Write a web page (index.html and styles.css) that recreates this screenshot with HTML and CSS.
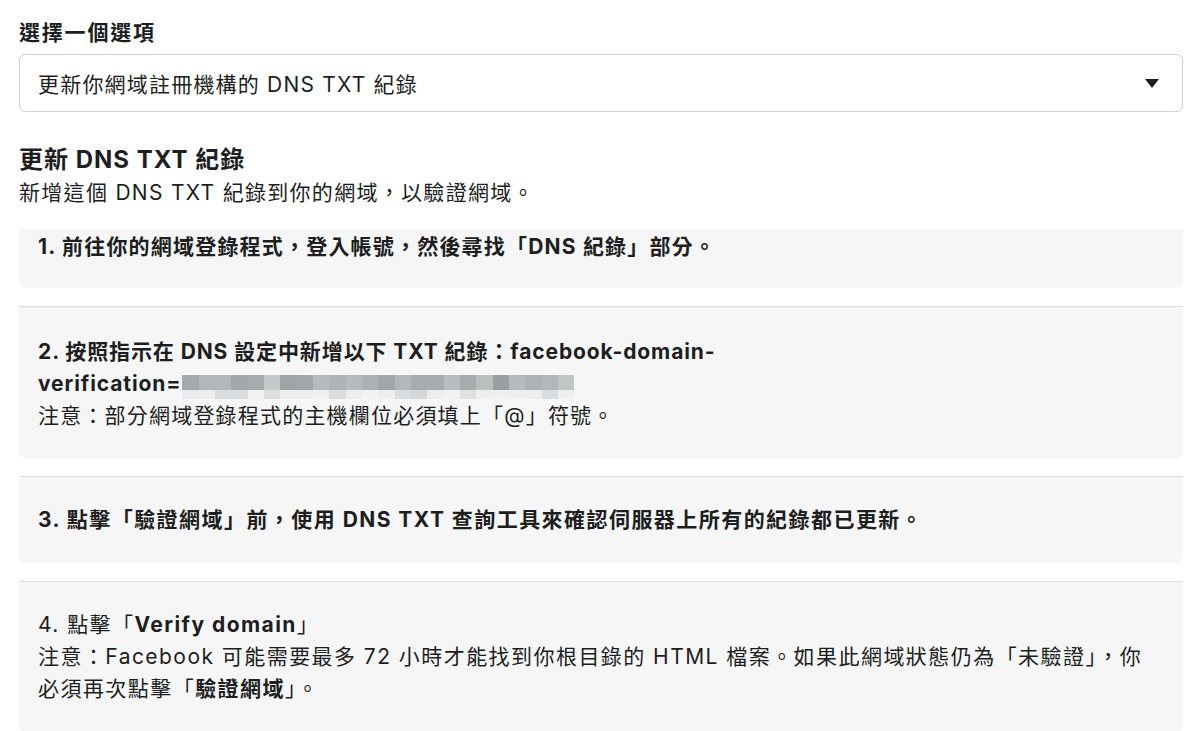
FILE: index.html
```html
<!DOCTYPE html>
<html lang="zh-Hant">
<head>
<meta charset="utf-8">
<link rel="stylesheet" href="styles.css">
</head>
<body>
<div class="page">
  <div class="label">選擇一個選項</div>
  <div class="select">
    <span class="select-text">更新你網域註冊機構的 DNS TXT 紀錄</span>
    <span class="caret"></span>
  </div>

  <h2 class="title">更新 DNS TXT 紀錄</h2>
  <p class="subtitle">新增這個 DNS TXT 紀錄到你的網域，以驗證網域。</p>

  <div class="steps">
    <div class="step step-first"><b>1. 前往你的網域登錄程式，登入帳號，然後尋找「DNS 紀錄」部分。</b></div>
    <div class="step">
      <b class="tight">2. 按照指示在 DNS 設定中新增以下 TXT 紀錄：facebook-domain-</b><br>
      <b class="tight">verification=</b><span class="blur">
        <span class="blur-row top">
          <i style="background:#a5a9ac"></i><i style="background:#b4b7b9"></i><i style="background:#b4b7b9"></i><i style="background:#a5a8ab"></i><i style="background:#a9acaf"></i><i style="background:#c6c9ca"></i><i style="background:#a0a4a7"></i><i style="background:#a3a6a9"></i><i style="background:#b8bbbd"></i><i style="background:#b0b3b6"></i><i style="background:#b8bbbd"></i><i style="background:#aeb1b4"></i><i style="background:#a3a6a9"></i><i style="background:#b4b7b9"></i><i style="background:#a8abae"></i><i style="background:#a8abae"></i><i style="background:#babdbf"></i><i style="background:#a9acaf"></i><i style="background:#bcbfc0"></i><i style="background:#9a9ea1"></i><i style="background:#b8bbbd"></i><i style="background:#afb2b5"></i><i style="background:#b4b7b9"></i><i style="background:#c2c5c6"></i>
        </span>
        <span class="blur-row bottom">
          <i style="background:#eaebec"></i><i style="background:#ededee"></i><i style="background:#d9dbdc"></i><i style="background:#d9dbdc"></i><i style="background:#f2f2f3"></i><i style="background:#dcdedf"></i><i style="background:#ededee"></i><i style="background:#ededee"></i><i style="background:#f0f0f1"></i><i style="background:#dadcdd"></i><i style="background:#ededee"></i><i style="background:#f2f2f3"></i><i style="background:#eeeeef"></i><i style="background:#dadcdd"></i><i style="background:#d4d6d7"></i><i style="background:#ededee"></i><i style="background:#f2f2f3"></i><i style="background:#dfe0e1"></i><i style="background:#eeeeef"></i><i style="background:#f0f0f1"></i><i style="background:#eeeeef"></i><i style="background:#ededee"></i><i style="background:#dadcdd"></i><i style="background:#eeeeef"></i>
        </span>
      </span><br>
      注意：部分網域登錄程式的主機欄位必須填上「@」符號。
    </div>
    <div class="step step-wide"><b>3. 點擊「驗證網域」前，使用 DNS TXT 查詢工具來確認伺服器上所有的紀錄都已更新。</b></div>
    <div class="step step-wide">
      4. 點擊「<b>Verify domain</b>」<br>
      注意：Facebook 可能需要最多 72 小時才能找到你根目錄的 HTML 檔案。如果此網域狀態仍為「未驗證」，你<br>必須再次點擊「<b>驗證網域</b>」。
    </div>
  </div>
</div>
</body>
</html>
```

FILE: styles.css
```css
* { box-sizing: border-box; }
html, body { margin: 0; padding: 0; background: #ffffff; }
body {
  font-family: Inter, "Noto Sans CJK TC", sans-serif;
  color: #1c1e21;
}
.page {
  width: 1164px;
  margin-left: 19px;
  padding-top: 20px;
}
.label {
  font-size: 21px;
  font-weight: 700;
  line-height: 26px;
  margin-bottom: 8px;
  letter-spacing: 1.8px;
}
.select {
  height: 58px;
  border: 1px solid #ccd0d5;
  border-radius: 6px;
  display: flex;
  align-items: center;
  justify-content: space-between;
  padding: 0 23px 0 18px;
  font-size: 21px;
  letter-spacing: 1.2px;
}
.caret {
  width: 0;
  height: 0;
  border-left: 7px solid transparent;
  border-right: 7px solid transparent;
  border-top: 9px solid #1c1e21;
}
.title {
  margin: 33px 0 0;
  font-size: 24px;
  font-weight: 700;
  line-height: 30px;
  letter-spacing: 1px;
}
.subtitle {
  margin: 3px 0 0;
  font-size: 21px;
  line-height: 30px;
  letter-spacing: 1.3px;
}
.steps {
  margin-top: 21px;
  display: flex;
  flex-direction: column;
  gap: 18px;
}
.step {
  background: #f6f6f6;
  border-top: 1px solid #dadde1;
  border-radius: 0 0 6px 6px;
  padding: 29px 19px 26px 19px;
  font-size: 21px;
  line-height: 32px;
  letter-spacing: 1.2px;
}
.step-wide {
  letter-spacing: 1.45px;
  padding-top: 27px;
  padding-bottom: 27px;
}
.step .tight { letter-spacing: 0.9px; }
.step-first {
  border-top: none;
  border-radius: 0 0 6px 6px;
  padding-top: 2px;
  padding-bottom: 25px;
}
.step b { font-weight: 700; }
.blur {
  display: inline-flex;
  flex-direction: column;
  vertical-align: top;
  width: 392px;
  height: 24px;
  margin-left: 1px;
  transform: translateY(7px);
}
.blur-row { display: flex; }
.blur-row i { flex: 1; }
.blur-row.top i { height: 15px; }
.blur-row.bottom i { height: 9px; }
```
